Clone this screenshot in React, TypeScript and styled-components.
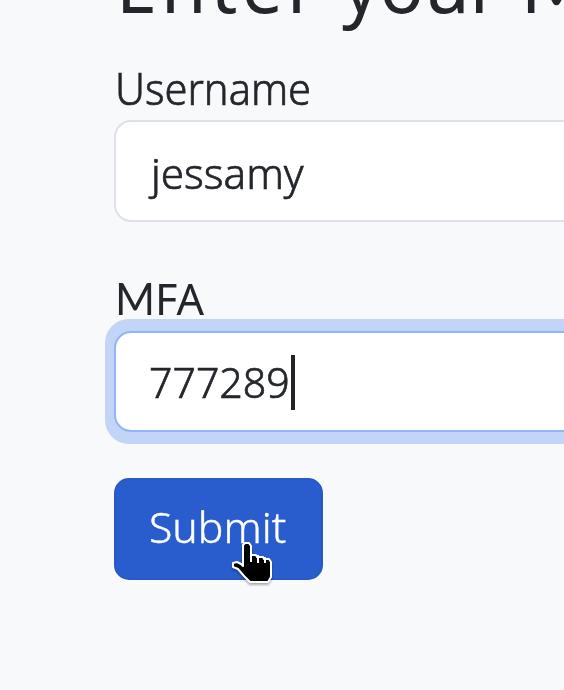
import React from "react";
import styled, { createGlobalStyle } from "styled-components";

const GlobalStyle = createGlobalStyle`
  * { box-sizing: border-box; }
  html, body, #root { margin: 0; width: 564px; height: 690px; overflow: hidden; background: #f8f9fb; }
  body { font-family: "Noto Sans", "Open Sans", sans-serif; color: #23262b; }
`;

const Page = styled.main`
  width: 564px;
  height: 690px;
  overflow: hidden;
  padding-left: 114px;
  background: #f8f9fb;
`;

const Text = styled.span<{ $scale: number; $spacing?: number }>`
  display: inline-block;
  white-space: pre;
  letter-spacing: ${(p) => p.$spacing ?? 0}px;
  transform: scaleX(${(p) => p.$scale});
  transform-origin: 0 50%;
`;

const ShortVertex = styled.span`
  font-family: Lato, sans-serif;
`;

const Heading = styled.h1`
  display: flex;
  margin: -70px 0 0 2px;
  height: 107px;
  font-size: 76px;
  line-height: 107px;
  font-weight: 400;
  width: 700px;
`;

const Word = styled.span<{ $width: number }>`
  flex: none;
  width: ${(p) => p.$width}px;
`;

const Label = styled.label`
  display: block;
  height: 60px;
  line-height: 60px;
  font-size: 44px;
  font-weight: 300;
  -webkit-text-stroke: 0.7px #23262b;
`;

const UserLabel = styled(Label)`
  margin: 21px 0 2px 1px;
`;

const MfaLabel = styled(Label)`
  margin: 46px 0 -9px 1px;
  font-weight: 400;
  -webkit-text-stroke: 0;
`;

const Field = styled.div<{ $focused?: boolean }>`
  display: flex;
  align-items: center;
  width: 600px;
  height: ${(p) => (p.$focused ? 101 : 102)}px;
  padding-left: ${(p) => (p.$focused ? 33 : 35)}px;
  border: 2px solid ${(p) => (p.$focused ? "#8fb4f8" : "#dfe1e8")};
  border-radius: 17px;
  background: #fff;
  font-size: 43px;
  font-weight: 300;
  line-height: 58px;
  -webkit-text-stroke: 0.7px #23262b;
`;

const FocusRing = styled.div`
  width: 620px;
  margin-left: -9px;
  padding: 12px 9px;
  border-radius: 24px;
  background: #c3d5f6;
`;

const Value = styled.div<{ $width?: number; $drop?: number }>`
  width: ${(p) => (p.$width ? `${p.$width}px` : "auto")};
  padding-top: ${(p) => p.$drop ?? 0}px;
  white-space: nowrap;
`;

const Caret = styled.div`
  width: 4px;
  height: 55px;
  margin-top: 1px;
  background: #212529;
`;

const Submit = styled.button`
  position: relative;
  display: block;
  width: 209px;
  height: 102px;
  margin-top: 34px;
  padding: 0 0 4px 33px;
  border: 2px solid #2859c5;
  border-radius: 15px;
  background: #295dce;
  color: #fff;
  font: 300 43px/58px "Noto Sans", sans-serif;
  -webkit-text-stroke: 0.4px #fff;
  text-align: left;
`;

const Pointer = styled.svg`
  position: absolute;
  left: 114px;
  top: 60px;
  filter: drop-shadow(0 2px 1px rgba(0, 0, 0, 0.3));
`;

export default function App() {
  return (
    <>
      <GlobalStyle />
      <Page>
        <Heading>
          <Word $width={226}><Text $scale={0.97} $spacing={4.2}>Enter</Text></Word>
          <Word $width={179}><Text $scale={0.97}>your</Text></Word>
          <Word $width={190}><Text $scale={1}><ShortVertex>M</ShortVertex>FA</Text></Word>
        </Heading>
        <UserLabel><Text $scale={0.945}>Username</Text></UserLabel>
        <Field><Value $drop={3}><Text $scale={0.98}>jessamy</Text></Value></Field>
        <MfaLabel><Text $scale={0.98}><ShortVertex>M</ShortVertex>FA</Text></MfaLabel>
        <FocusRing>
          <Field $focused>
            <Value $width={142}><Text $scale={0.955}>777289</Text></Value>
            <Caret />
          </Field>
        </FocusRing>
        <Submit>
          <Text $scale={0.995}>Submit</Text>
          <Pointer width="44" height="45" viewBox="0 0 44 45">
            <path
              d="M15 3h4l2 3v9h5l1 2h6l1 2h5l2 3v15l-3 5H20l-6-6-6-7-5-2v-4l4-1 4 2 2 2V5z"
              fill="#000"
              stroke="#fff"
              strokeWidth="2"
              strokeLinejoin="round"
            />
            <path d="M21 13v9M28 15v8M35 17v6" stroke="#fff" strokeWidth="2" />
          </Pointer>
        </Submit>
      </Page>
    </>
  );
}
